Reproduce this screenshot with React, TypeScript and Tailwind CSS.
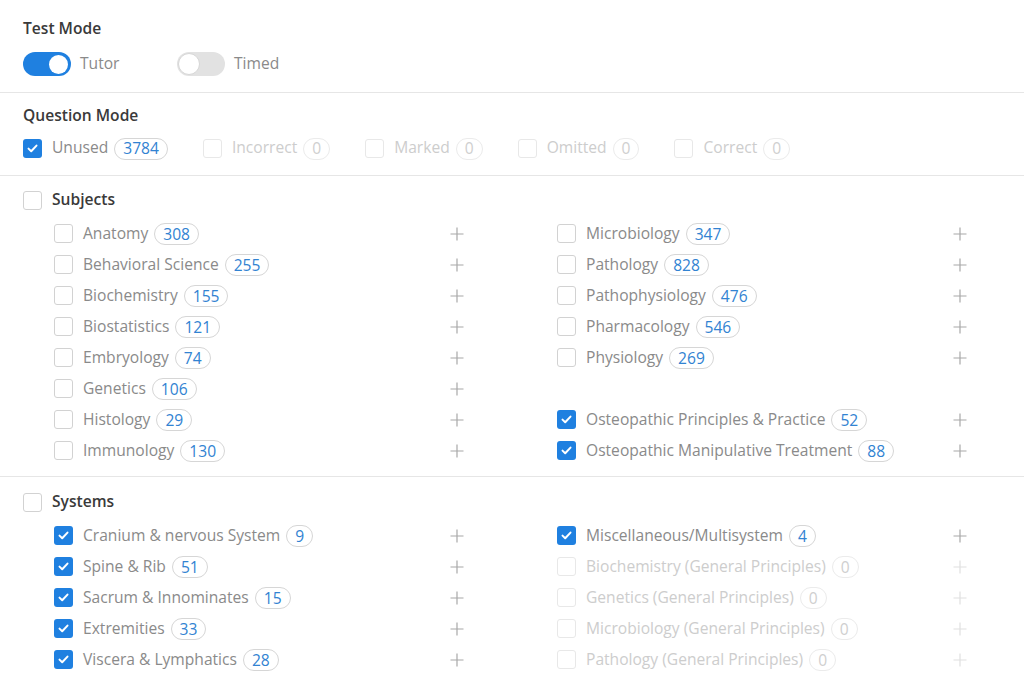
import React from "react";

type Item = { label: string; count: number; checked?: boolean; disabled?: boolean };

const BLUE = "bg-[#1f80e0]";

function Check({ checked, disabled }: { checked?: boolean; disabled?: boolean }) {
  if (checked) {
    return (
      <span className={`flex h-[19px] w-[19px] shrink-0 items-center justify-center rounded-[3px] ${BLUE}`}>
        <svg width="11" height="9" viewBox="0 0 11 9" fill="none">
          <path d="M1.5 4.6 L4.2 7.2 L9.5 1.6" stroke="white" strokeWidth="2" strokeLinecap="round" strokeLinejoin="round" />
        </svg>
      </span>
    );
  }
  return (
    <span
      className={`block h-[19px] w-[19px] shrink-0 rounded-[3px] border ${
        disabled ? "border-[#e8e8e8]" : "border-[#d2d2d2]"
      } bg-white`}
    />
  );
}

function Badge({ n, disabled }: { n: number; disabled?: boolean }) {
  return (
    <span
      className={`inline-flex h-[22px] items-center rounded-full border px-[8px] text-[15.6px] leading-none ${
        disabled ? "border-[#ebebeb] text-[#cfcfcf]" : "border-[#d6d6d6] text-[#3283d2]"
      }`}
    >
      {n}
    </span>
  );
}

function Plus({ disabled }: { disabled?: boolean }) {
  return (
    <svg width="14" height="14" viewBox="0 0 14 14" className="shrink-0">
      <path d="M7 0.5 V13.5 M0.5 7 H13.5" stroke={disabled ? "#e0e0e0" : "#a8a8a8"} strokeWidth="1.2" />
    </svg>
  );
}

function Row({ item }: { item: Item }) {
  return (
    <div className="flex h-[31px] w-[410px] items-center justify-between">
      <div className="flex items-center">
        <Check checked={item.checked} disabled={item.disabled} />
        <span className={`ml-[10px] text-[15.6px] ${item.disabled ? "text-[#cdcdcd]" : "text-[#8a8a8a]"}`}>
          {item.label}
        </span>
        <span className="ml-[6px]">
          <Badge n={item.count} disabled={item.disabled} />
        </span>
      </div>
      <Plus disabled={item.disabled} />
    </div>
  );
}

function Column({ items }: { items: Item[] }) {
  return (
    <div className="flex flex-col">
      {items.map((it) => (
        <Row key={it.label} item={it} />
      ))}
    </div>
  );
}

function Toggle({ on }: { on: boolean }) {
  return on ? (
    <span className={`flex h-[24px] w-[48px] items-center justify-end rounded-full ${BLUE} pr-[3px]`}>
      <span className="block h-[19px] w-[19px] rounded-full bg-white" />
    </span>
  ) : (
    <span className="flex h-[24px] w-[48px] items-center rounded-full bg-[#e2e2e2] pl-[1px]">
      <span className="block h-[22px] w-[22px] rounded-full border border-[#d6d6d6] bg-white" />
    </span>
  );
}

const subjLeft: Item[] = [
  { label: "Anatomy", count: 308 },
  { label: "Behavioral Science", count: 255 },
  { label: "Biochemistry", count: 155 },
  { label: "Biostatistics", count: 121 },
  { label: "Embryology", count: 74 },
  { label: "Genetics", count: 106 },
  { label: "Histology", count: 29 },
  { label: "Immunology", count: 130 },
];

const subjRight: (Item | null)[] = [
  { label: "Microbiology", count: 347 },
  { label: "Pathology", count: 828 },
  { label: "Pathophysiology", count: 476 },
  { label: "Pharmacology", count: 546 },
  { label: "Physiology", count: 269 },
  null,
  { label: "Osteopathic Principles & Practice", count: 52, checked: true },
  { label: "Osteopathic Manipulative Treatment", count: 88, checked: true },
];

const sysLeft: Item[] = [
  { label: "Cranium & nervous System", count: 9, checked: true },
  { label: "Spine & Rib", count: 51, checked: true },
  { label: "Sacrum & Innominates", count: 15, checked: true },
  { label: "Extremities", count: 33, checked: true },
  { label: "Viscera & Lymphatics", count: 28, checked: true },
];

const sysRight: Item[] = [
  { label: "Miscellaneous/Multisystem", count: 4, checked: true },
  { label: "Biochemistry (General Principles)", count: 0, disabled: true },
  { label: "Genetics (General Principles)", count: 0, disabled: true },
  { label: "Microbiology (General Principles)", count: 0, disabled: true },
  { label: "Pathology (General Principles)", count: 0, disabled: true },
];

const qModes: Item[] = [
  { label: "Unused", count: 3784, checked: true },
  { label: "Incorrect", count: 0, disabled: true },
  { label: "Marked", count: 0, disabled: true },
  { label: "Omitted", count: 0, disabled: true },
  { label: "Correct", count: 0, disabled: true },
];

export default function App() {
  return (
    <div
      className="min-h-[683px] w-full bg-white"
      style={{ fontFamily: '"Open Sans", "Noto Sans", sans-serif' }}
    >
      {/* Test Mode */}
      <section className="border-b border-[#e6e6e6] px-[23px] pb-[16px] pt-[18px]">
        <h2 className="text-[15.6px] font-semibold leading-[20px] text-[#3a3a3a]">Test Mode</h2>
        <div className="mt-[14px] flex items-center">
          <div className="flex w-[154px] items-center">
            <Toggle on />
            <span className="ml-[9px] text-[15.6px] text-[#8a8a8a]">Tutor</span>
          </div>
          <div className="flex items-center">
            <Toggle on={false} />
            <span className="ml-[9px] text-[15.6px] text-[#8a8a8a]">Timed</span>
          </div>
        </div>
      </section>

      {/* Question Mode */}
      <section className="border-b border-[#e6e6e6] px-[23px] pb-[17px] pt-[12px]">
        <h2 className="text-[15.6px] font-semibold leading-[20px] text-[#3a3a3a]">Question Mode</h2>
        <div className="mt-[13px] flex h-[20px] items-center gap-[35px]">
          {qModes.map((q) => (
            <div key={q.label} className="flex items-center">
              <Check checked={q.checked} disabled={q.disabled} />
              <span className={`ml-[10px] text-[15.6px] ${q.disabled ? "text-[#cdcdcd]" : "text-[#8a8a8a]"}`}>
                {q.label}
              </span>
              <span className="ml-[6px]">
                <Badge n={q.count} disabled={q.disabled} />
              </span>
            </div>
          ))}
        </div>
      </section>

      {/* Subjects */}
      <section className="border-b border-[#e6e6e6] pb-[10px] pl-[23px] pt-[14px]">
        <div className="flex h-[20px] items-center">
          <Check />
          <span className="ml-[10px] text-[15.6px] font-semibold text-[#3a3a3a]">Subjects</span>
        </div>
        <div className="mt-[8px] grid grid-cols-[503px_1fr] pl-[31px]">
          <Column items={subjLeft} />
          <div className="flex flex-col">
            {subjRight.map((it, i) =>
              it ? <Row key={it.label} item={it} /> : <div key={i} className="h-[31px]" />
            )}
          </div>
        </div>
      </section>

      {/* Systems */}
      <section className="pb-[10px] pl-[23px] pt-[15px]">
        <div className="flex h-[20px] items-center">
          <Check />
          <span className="ml-[10px] text-[15.6px] font-semibold text-[#3a3a3a]">Systems</span>
        </div>
        <div className="mt-[8px] grid grid-cols-[503px_1fr] pl-[31px]">
          <Column items={sysLeft} />
          <Column items={sysRight} />
        </div>
      </section>
    </div>
  );
}
